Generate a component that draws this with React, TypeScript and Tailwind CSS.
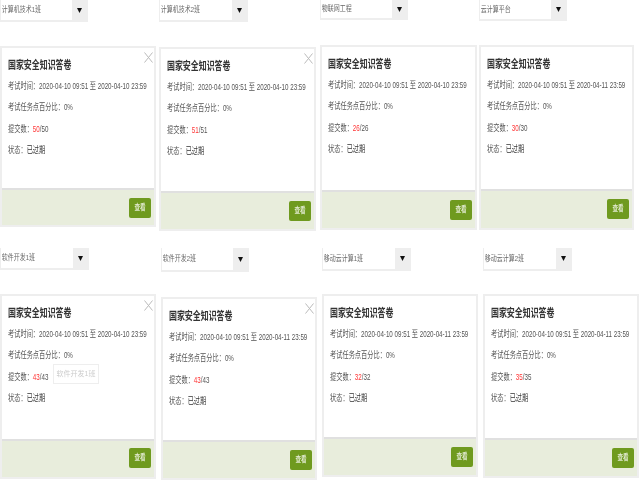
type Exam = {
  className: string
  end: string
  done: number
  closable?: boolean
  tooltip?: boolean
  cell: string
  select: string
  card: string
  footer: string
  button: string
}

const FONT = "font-['Liberation_Sans','Noto_Sans_CJK_SC',sans-serif]"

const TOP_ROW: Exam[] = [
  {
    className: '计算机技术1班', end: '2020-04-10 23:59', done: 50, closable: true,
    cell: 'ml-0', select: 'h-[22px] w-[88px]', card: 'mt-[24px] h-[181px] w-[156px]', footer: 'h-[37px]', button: 'mt-[8px]',
  },
  {
    className: '计算机技术2班', end: '2020-04-10 23:59', done: 51, closable: true,
    cell: 'ml-[3px]', select: 'h-[22px] w-[89px]', card: 'mt-[25px] h-[184px] w-[157px]', footer: 'h-[38px]', button: 'mt-[8px]',
  },
  {
    className: '物联网工程', end: '2020-04-10 23:59', done: 26,
    cell: 'ml-[4px]', select: 'h-[20px] w-[88px]', card: 'mt-[25px] h-[185px] w-[157px]', footer: 'h-[38px]', button: 'mt-[8px]',
  },
  {
    className: '云计算平台', end: '2020-04-11 23:59', done: 30,
    cell: 'ml-[2px]', select: 'h-[21px] w-[88px]', card: 'mt-[24px] h-[185px] w-[155px]', footer: 'h-[39px]', button: 'mt-[8px]',
  },
]

const BOTTOM_ROW: Exam[] = [
  {
    className: '软件开发1班', end: '2020-04-10 23:59', done: 43, closable: true, tooltip: true,
    cell: 'ml-0', select: 'h-[22px] w-[89px]', card: 'mt-[24px] h-[185px] w-[156px]', footer: 'h-[38px]', button: 'mt-[7px]',
  },
  {
    className: '软件开发2班', end: '2020-04-11 23:59', done: 43, closable: true,
    cell: 'ml-[5px]', select: 'h-[24px] w-[88px]', card: 'mt-[25px] h-[183px] w-[156px]', footer: 'h-[38px]', button: 'mt-[8px]',
  },
  {
    className: '移动云计算1班', end: '2020-04-11 23:59', done: 32,
    cell: 'ml-[5px]', select: 'h-[23px] w-[89px]', card: 'mt-[23px] h-[183px] w-[156px]', footer: 'h-[38px]', button: 'mt-[8px]',
  },
  {
    className: '移动云计算2班', end: '2020-04-11 23:59', done: 35,
    cell: 'ml-[5px]', select: 'h-[23px] w-[89px]', card: 'mt-[23px] h-[184px] w-[156px]', footer: 'h-[38px]', button: 'mt-[8px]',
  },
]

function ClassSelect({ name, size }: { name: string; size: string }) {
  return (
    <div className={`flex border-x border-b-2 border-[#eeeeee] bg-white ${size}`}>
      <span className="flex-1 origin-left scale-x-[0.75] self-center pl-[1px] text-[8px] whitespace-nowrap text-[#666666] blur-[0.3px]">
        {name}
      </span>
      <span className="flex w-[15px] items-center justify-center bg-[#eeeeee]">
        <svg width="5" height="5" viewBox="0 0 5 5">
          <path d="M0 0h5L2.5 5z" fill="#111111" />
        </svg>
      </span>
    </div>
  )
}

function ExamCard({ exam }: { exam: Exam }) {
  return (
    <div className={exam.cell}>
      <ClassSelect name={exam.className} size={exam.select} />
      <div className={`relative flex flex-col border-2 border-[#eeeeee] bg-white ${exam.card}`}>
        {exam.closable && (
          <svg
            className="absolute top-[4px] right-[1px] text-[#bbbbbb]"
            width="9"
            height="11"
            viewBox="0 0 9 11"
            fill="none"
            stroke="currentColor"
          >
            <path d="M0.5 0.5l8 10M8.5 0.5l-8 10" />
          </svg>
        )}
        <div className="flex-1 pt-[9px] pl-[6px]">
          <div className="origin-left scale-x-[0.69] text-[9px] leading-[21.3px] whitespace-nowrap text-[#555555] blur-[0.3px]">
            <h2 className="mb-[3px] text-[11.5px] leading-[16px] font-bold text-[#333333]">
              国家安全知识答卷
            </h2>
            <p>考试时间：2020-04-10 09:51 至 {exam.end}</p>
            <p>考试任务点百分比：0%</p>
            <p>
              提交数：<span className="text-[#ff3333]">{exam.done}</span>/{exam.done}
            </p>
            <p>
              状态：<span className="text-[#333333]">已过期</span>
            </p>
          </div>
        </div>
        <div className={`flex justify-end border-t-2 border-[#e0e0e0] bg-[#e8eddc] pr-[3px] ${exam.footer}`}>
          <button className={`h-[20px] w-[22px] rounded-[2px] bg-[#6f9a1f] text-[#dfe8cc] ${exam.button}`}>
            <span className="block scale-x-[0.7] text-[8px] font-bold whitespace-nowrap">查看</span>
          </button>
        </div>
        {exam.tooltip && (
          <div className="absolute top-[68px] left-[51px] flex h-[20px] w-[46px] items-center justify-center border border-[#eeeeee] bg-white text-[7px] text-[#cccccc]">
            {exam.className}
          </div>
        )}
      </div>
    </div>
  )
}

export default function App() {
  return (
    <div className={`h-[480px] w-[640px] overflow-hidden bg-white blur-[0.3px] ${FONT}`}>
      <div className="flex h-[248px]">
        {TOP_ROW.map((exam) => (
          <ExamCard key={exam.className} exam={exam} />
        ))}
      </div>
      <div className="flex">
        {BOTTOM_ROW.map((exam) => (
          <ExamCard key={exam.className} exam={exam} />
        ))}
      </div>
    </div>
  )
}
